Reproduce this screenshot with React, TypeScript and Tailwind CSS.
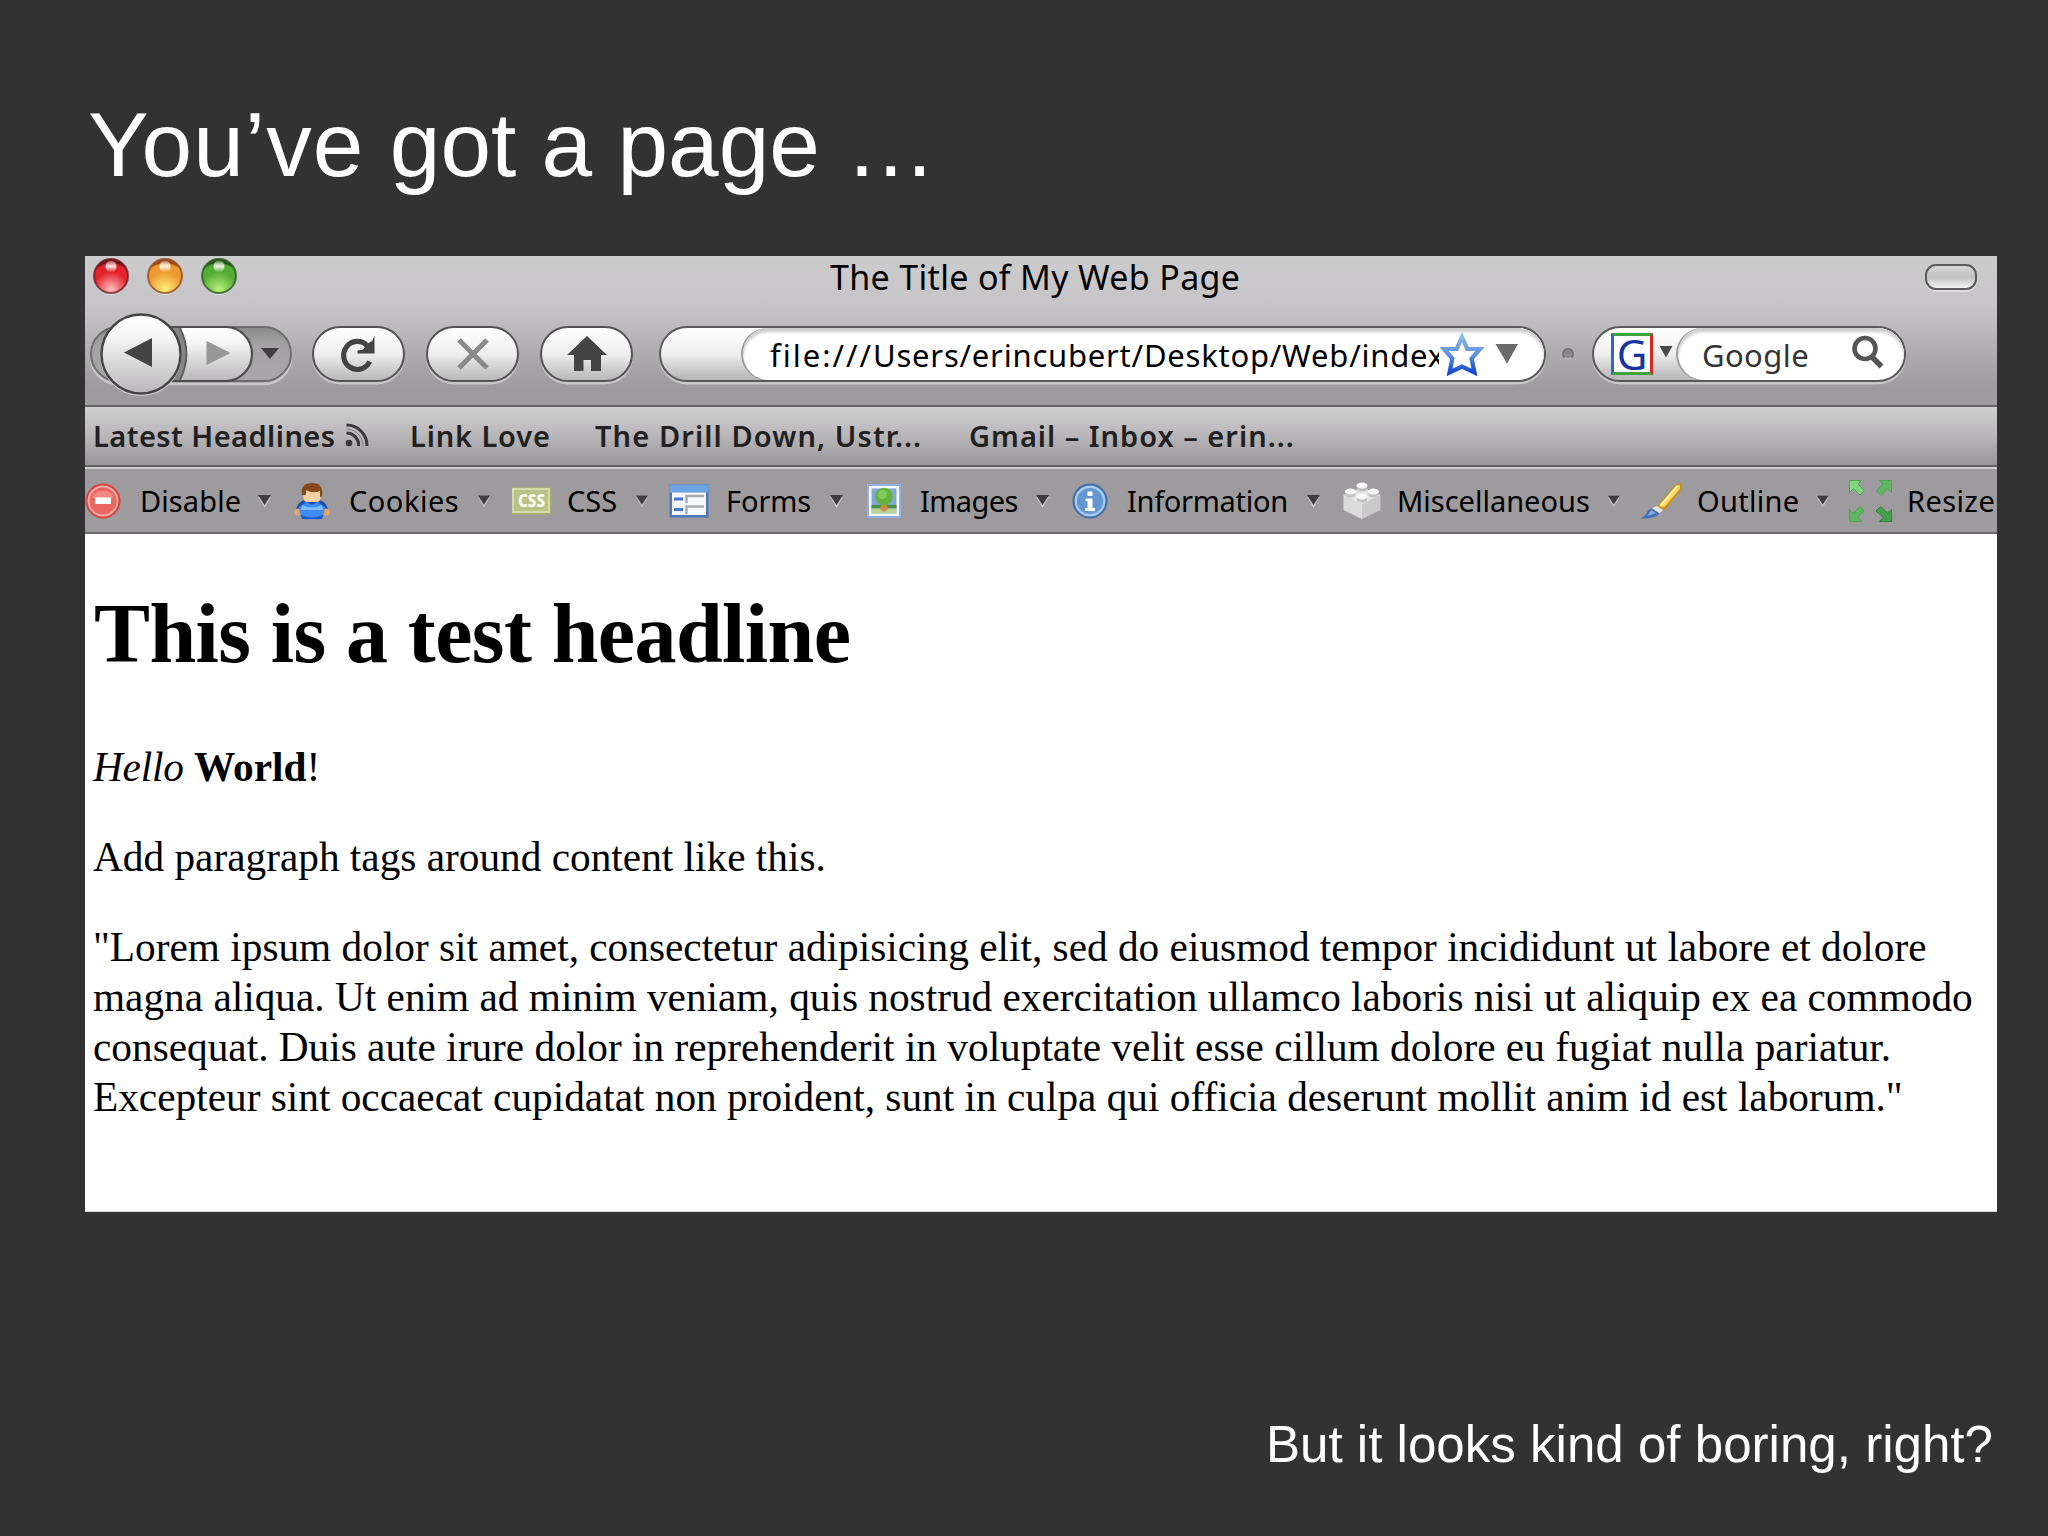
import type { ReactNode } from "react";

// ------------------------------ TITLE BAR ------------------------------
const LIGHTS = [
  { id: "close", rim: "#5e0f16", mid: "#e3222b", glow: "#ffc0c0" },
  { id: "minimize", rim: "#8a3a12", mid: "#ee9a33", glow: "#ffee7a" },
  { id: "zoom", rim: "#1c4a12", mid: "#55ac35", glow: "#b6f27c" },
];

function TrafficLight({ id, rim, mid, glow }: { id: string; rim: string; mid: string; glow: string }) {
  return (
    <svg width="38" height="40" viewBox="0 0 38 40">
      <defs>
        <radialGradient id={id} cx="0.5" cy="0.9" r="0.95">
          <stop offset="0" stopColor={glow} />
          <stop offset="0.55" stopColor={mid} />
          <stop offset="0.75" stopColor={mid} />
          <stop offset="1" stopColor={rim} />
        </radialGradient>
        <linearGradient id={id + "-gloss"} x1="0" y1="0" x2="0" y2="1">
          <stop offset="0" stopColor="#fff" stopOpacity="0.25" />
          <stop offset="0.5" stopColor="#fff" stopOpacity="0.85" />
          <stop offset="1" stopColor="#fff" stopOpacity="0" />
        </linearGradient>
      </defs>
      <ellipse cx="19" cy="21.5" rx="17.5" ry="17.5" fill="#e2e1e2" />
      <circle cx="19" cy="20" r="17" fill={"url(#" + id + ")"} stroke={rim} strokeWidth="2" strokeOpacity="0.7" />
      <path d="M6 11 A16 16 0 0 1 32 11 Q19 3 6 11Z" fill={rim} fillOpacity="0.75" />
      <ellipse cx="19" cy="10.500" rx="5.500" ry="6" fill={"url(#" + id + "-gloss)"} />
    </svg>
  );
}

function TitleBar() {
  return (
    <div className="flex h-10 items-center pl-[7px]">
      <div className="flex w-[738px] gap-[16px]">
        {LIGHTS.map((l) => <TrafficLight key={l.id} {...l} />)}
      </div>
      <h2 className="w-[1095px] pt-px text-[34px] leading-10 tracking-[0.33px] text-black">The Title of My Web Page</h2>
      <div className="mt-px h-[26px] w-[52px] rounded-[11px] border-[2.5px] border-[#5b5a5b] bg-linear-to-b from-[#d9d8d9] via-[#c2c1c2] to-[#f4f4f4] shadow-[0_2px_0_#dddcdd]" />
    </div>
  );
}

// ------------------------------ NAVIGATION ------------------------------
function HistoryButtons() {
  return (
    <svg width="210" height="86" viewBox="85 311 210 86">
      <defs>
        <linearGradient id="btn" x1="0" y1="0" x2="0" y2="1">
          <stop offset="0" stopColor="#ffffff" />
          <stop offset="0.3" stopColor="#f4f4f4" />
          <stop offset="1" stopColor="#b9b7b9" />
        </linearGradient>
        <linearGradient id="slot" x1="0" y1="0" x2="0" y2="1">
          <stop offset="0" stopColor="#8a898a" />
          <stop offset="0.3" stopColor="#a3a1a3" />
          <stop offset="1" stopColor="#a9a7a9" />
        </linearGradient>
      </defs>
      <rect x="91" y="329" width="200" height="55" rx="27" fill="none" stroke="#c9c8c9" strokeWidth="2.5" />
      <rect x="91" y="327" width="200" height="54" rx="27" fill="url(#slot)" stroke="#6d6c6d" strokeWidth="2" />
      <path d="M150 327 H226 A26 27 0 0 1 226 381 H150Z" fill="url(#btn)" stroke="#4f4e4f" strokeWidth="2.2" />
      <path d="M166 328 H180 Q193 354 180 380 H166Z" fill="#868586" />
      <path d="M180 328 Q193 354 180 380" fill="none" stroke="#5c5b5c" strokeWidth="1.8" />
      <circle cx="141" cy="355.5" r="39.5" fill="none" stroke="#cdcccd" strokeWidth="2" />
      <circle cx="141" cy="354" r="39.5" fill="url(#btn)" stroke="#454445" strokeWidth="2.4" />
      <path d="M124 352.5 L152 338 V367Z" fill="#444344" />
      <path d="M206.500 341 L230.500 353 L206.500 365Z" fill="#989798" />
      <path d="M261 348 H279 L270 359Z" fill="#3f3e3f" />
    </svg>
  );
}

function PillButton({ children }: { children: ReactNode }) {
  return (
    <button className="flex h-[56px] w-[93px] items-center justify-center rounded-full border-[2.5px] border-[#545354] bg-linear-to-b from-white via-[#eeeeee] to-[#bab8ba] shadow-[0_2.5px_0_#c9c8c9]">
      {children}
    </button>
  );
}

function LocationBar() {
  return (
    <div className="ml-[26px] flex h-[56px] w-[887px] overflow-hidden rounded-full border-[2.5px] border-[#5a595a] bg-linear-to-b from-white via-[#eeeeee] to-[#b6b4b6] pl-[82px] shadow-[0_2.5px_0_#c9c8c9]">
      <div className="flex flex-1 items-center rounded-full bg-white pl-[27px] text-[31px] leading-none text-black shadow-[inset_0_4px_3px_#cfcecf,-2px_0_0_#9d9c9d]">
        <div className="flex w-[669px] overflow-hidden pt-px leading-[48px] whitespace-nowrap">
          <span className="tracking-[2px]">file:///</span>
          <span className="tracking-[0.77px]">Users/erincubert/Desktop/Web/index</span>
        </div>
        <svg className="ml-px" width="44" height="44" viewBox="0 0 44 44">
          <defs>
            <linearGradient id="star" x1="0" y1="0" x2="0" y2="1">
              <stop offset="0" stopColor="#8db9e8" />
              <stop offset="0.5" stopColor="#5b92e0" />
              <stop offset="1" stopColor="#1748cf" />
            </linearGradient>
          </defs>
          <path d="M22 5 L27.300 16.800 L40 17 L31.600 26.500 L34.500 40.500 L22 34.500 L9.500 40.500 L12.400 26.500 L4 17 L16.700 16.800Z" fill="#fff" stroke="url(#star)" strokeWidth="4.2" />
        </svg>
        <svg className="ml-[11px]" width="24" height="20" viewBox="0 0 24 20">
          <path d="M0.500 0 H23 L12 19.500Z" fill="#6b6a6b" />
        </svg>
      </div>
    </div>
  );
}

function SearchBar() {
  return (
    <div className="ml-[18px] flex h-[56px] w-[314px] items-center overflow-hidden rounded-full border-[2.5px] border-[#5a595a] bg-linear-to-b from-white via-[#eeeeee] to-[#b6b4b6] pl-[17px] shadow-[0_2.5px_0_#c9c8c9]">
      <div className="flex h-[42px] w-[42px] items-center justify-center border-[3px] border-x-[#2f62d8] border-y-[#3ea43a] border-r-[#d42a22] bg-white text-[42px] leading-none text-[#17349c]">
        G
      </div>
      <svg className="-mt-1 ml-[6px]" width="14" height="12" viewBox="0 0 14 12">
        <path d="M0.500 0 H13.500 L7 11.500Z" fill="#4b4a4b" />
      </svg>
      <div className="ml-[5px] flex h-full flex-1 items-center rounded-full bg-white pl-[24px] shadow-[inset_0_4px_3px_#cfcecf,-2px_0_0_#9d9c9d]">
        <span className="w-[149px] pt-px text-[31px] leading-[48px] tracking-[0.4px] text-[#353435]">Google</span>
        <svg className="-mt-1" width="34" height="34" viewBox="0 0 34 34">
          <ellipse cx="14" cy="13.500" rx="10.500" ry="10.500" fill="none" stroke="#565556" strokeWidth="4.600" />
          <path d="M21 22 L30.500 31.500" stroke="#565556" strokeWidth="5.500" />
        </svg>
      </div>
    </div>
  );
}

function NavigationBar() {
  return (
    <div className="flex h-[109px] items-start pt-[15px]">
      <div className="flex h-[86px] items-center">
        <HistoryButtons />
        <div className="ml-[17px] flex gap-[21px]">
          <PillButton>
            <svg className="-ml-1" width="40" height="44" viewBox="0 0 40 44">
              <path d="M32.700 29.500 A13.700 14 0 1 1 30 13.500" fill="none" stroke="#454445" strokeWidth="5.200" />
              <path d="M37.500 4 V21.500 H20.500 V18.500 L26 17.500 L30 12 L35 9Z" fill="#454445" />
            </svg>
          </PillButton>
          <PillButton>
            <svg width="34" height="34" viewBox="0 0 34 34">
              <path d="M3 3 L31 31 M31 3 L3 31" stroke="#8b8a8b" strokeWidth="5" />
            </svg>
          </PillButton>
          <PillButton>
            <svg width="40" height="36" viewBox="0 0 40 36">
              <path d="M20 0 L40 19 H34 V35 H24 V24 H16.500 V35 H7 V19 H0Z" fill="#454445" />
            </svg>
          </PillButton>
        </div>
        <LocationBar />
        <div className="ml-[16px] h-[12px] w-[12px] rounded-full border-2 border-[#747374] border-b-[#b5b4b5] bg-[#8b8a8b]" />
        <SearchBar />
      </div>
    </div>
  );
}

// ------------------------------ BOOKMARKS ------------------------------
function BookmarksBar() {
  return (
    <div className="flex h-[62px] items-center border-y-[2.5px] border-[#646364] bg-linear-to-b from-[#d0cfd0] via-[#b8b6b8] to-[#989698] pb-[2px] pl-[8px] text-[29px] leading-none font-semibold whitespace-nowrap text-[#222122]">
      <span className="w-[252px] tracking-[0.45px]">Latest Headlines</span>
      <svg width="24" height="24" viewBox="0 0 24 24" fill="none" stroke="#3a393a" strokeWidth="3">
        <circle cx="4" cy="20" r="3.300" fill="#3a393a" stroke="none" />
        <path d="M1.500 10 A12 12 0 0 1 13.500 23 M1.500 2 A20.500 20.500 0 0 1 22 23" />
        <path d="M1.500 6 A16.500 16.500 0 0 1 18 23" stroke="#858485" strokeWidth="1" />
      </svg>
      <span className="ml-[41px] w-[185px] tracking-[0.85px]">Link Love</span>
      <span className="w-[374px] tracking-[1.1px]">The Drill Down, Ustr...</span>
      <span className="tracking-[1px]">Gmail – Inbox – erin...</span>
    </div>
  );
}

// ------------------------------ DEVELOPER TOOLBAR ------------------------------
function DisableIcon() {
  return (
    <svg width="36" height="38" viewBox="0 0 36 38">
      <circle cx="18" cy="19" r="17.500" fill="#d8433f" />
      <circle cx="18" cy="19" r="14.500" fill="#ea6661" stroke="#f6a9a5" strokeWidth="2" />
      <path d="M7 16 A12 12 0 0 1 29 16Z" fill="#f08a85" />
      <rect x="10" y="15.500" width="16" height="6.500" fill="#fff" />
    </svg>
  );
}

function CookiesIcon() {
  return (
    <svg width="36" height="38" viewBox="0 0 36 38">
      <path d="M2 27 Q4 19 12 17.500 H24 Q32 19 34 27 L30 33 H6Z" fill="#1f4fae" />
      <circle cx="4" cy="30" r="3.500" fill="#e8a468" />
      <circle cx="32" cy="30" r="3.500" fill="#e8a468" />
      <rect x="9.500" y="6" width="17" height="14" rx="4" fill="#f6cfa2" />
      <path d="M8 13 Q6 1 18 1 Q30 1 28 14 L26 15 V9 Q19 12 12 8 V13Z" fill="#87481a" />
      <path d="M13 20 Q18 25 23 20 L31 25 L29 36 Q18 39 7 36 L5 25Z" fill="#3f8df0" />
      <path d="M8 23 Q18 28 28 23 L29 28 H7Z" fill="#7dbbfa" />
      <path d="M7 33 Q18 38 29 33 L28 37 H8Z" fill="#1557c4" />
    </svg>
  );
}

function CssIcon() {
  return (
    <svg width="41" height="28" viewBox="0 0 41 28">
      <rect x="0.500" y="0.500" width="40" height="27" fill="#a5b06a" />
      <rect x="2" y="2" width="36" height="23" fill="#bac386" stroke="#d5dbad" strokeWidth="2" />
      <text x="20.500" y="20" textAnchor="middle" textLength="27" lengthAdjust="spacingAndGlyphs" fontSize="17" fontWeight="800" fontFamily="Noto Sans, sans-serif" fill="#fbfcf0">CSS</text>
    </svg>
  );
}

function FormsIcon() {
  return (
    <svg width="40" height="34" viewBox="0 0 40 34">
      <rect x="0.500" y="0.500" width="39" height="33" fill="#5076bd" />
      <rect x="0.500" y="0.500" width="39" height="8" fill="#6ea4e2" />
      <rect x="3" y="8.500" width="34" height="22.500" fill="#f7f8fb" />
      <path d="M5 15 H14 M5 25.500 H14" stroke="#4c73d6" strokeWidth="2.800" />
      <path d="M17.500 19 V12 H35 M17.500 30 V22.500 H35" fill="none" stroke="#a9aaac" strokeWidth="2.400" />
    </svg>
  );
}

function ImagesIcon() {
  return (
    <svg width="34" height="34" viewBox="0 0 34 34">
      <rect x="1" y="1" width="32" height="32" fill="#f8fafd" stroke="#8fb0e0" strokeWidth="2" />
      <rect x="4.500" y="4.500" width="25" height="25" fill="#84a5d3" />
      <rect x="4.500" y="21" width="25" height="3.500" fill="#4b923f" />
      <rect x="4.500" y="24.500" width="25" height="5" fill="#b9d59c" />
      <path d="M15 20 H19 L21 25 L17 28 L13 25Z" fill="#cf8a45" />
      <circle cx="17" cy="12.500" r="8.800" fill="#64b43f" />
      <circle cx="15.500" cy="10.500" r="4.500" fill="#83ca5a" />
    </svg>
  );
}

function InformationIcon() {
  return (
    <svg width="36" height="38" viewBox="0 0 36 38">
      <circle cx="18" cy="19" r="17.500" fill="#3c6cae" />
      <circle cx="18" cy="19" r="14.300" fill="#6297cf" stroke="#a9cbec" strokeWidth="2.400" />
      <path d="M15.500 9.500 H20.500 V14 H15.500Z M13.500 16.500 H20.500 V26 H23 V29 H13 V26 H15.500 V19 H13.500Z" fill="#fff" />
    </svg>
  );
}

function MiscIcon() {
  return (
    <svg width="38" height="38" viewBox="0 0 38 38">
      <path d="M0.500 13 L19 20 V37 L0.500 28Z" fill="#dcdcdc" />
      <path d="M37.500 13 L19 20 V37 L37.500 28Z" fill="#c9c9c9" />
      <path d="M0.500 13 L19 5 L37.500 13 L19 22Z" fill="#e6e6e6" />
      <path d="M14 3 H24 V8 Q19 11 14 8Z M2.500 9 H12.500 V14 Q7.500 17 2.500 14Z M25.500 9 H35.500 V14 Q30.500 17 25.500 14Z M14 14 H24 V19 Q19 22 14 19Z" fill="#c2c2c2" />
      <g fill="#fafafa">
        <ellipse cx="19" cy="3.500" rx="5.500" ry="3" />
        <ellipse cx="7.500" cy="9.500" rx="5.500" ry="3" />
        <ellipse cx="30.500" cy="9.500" rx="5.500" ry="3" />
        <ellipse cx="19" cy="14.500" rx="5.500" ry="3" />
      </g>
    </svg>
  );
}

function OutlineIcon() {
  return (
    <svg width="42" height="38" viewBox="0 0 42 38">
      <path d="M41.500 1 Q42.500 4 41 8 L25 28 L16 25 L34 4 Q38 0.500 41.500 1Z" fill="#c98f1f" />
      <path d="M39.500 2.500 L40 6.500 L24 25.500 L19 24 L35 5Z" fill="#f8d75c" />
      <path d="M37.500 4 L20.500 23.500" stroke="#fff2b0" strokeWidth="2" />
      <path d="M12 26 L17 24 L23 28 L19 32Z" fill="#e4e4df" />
      <path d="M12 26.500 L19.500 31.500 Q15 37 0.500 36.500 Q6 33.500 7.500 29.500 Q9 26.500 12 26.500Z" fill="#3f6fb9" />
      <path d="M11.500 28 L16 31 Q11 33.500 7 33.500Z" fill="#84abdf" />
    </svg>
  );
}

function ResizeIcon() {
  return (
    <svg width="43" height="42" viewBox="0 0 43 42" stroke="#4fa352" strokeWidth="1" fill="#6cc46c">
      <path d="M0.500 0.500 H12 L9 4 L15 10.500 L11 15 L4.500 8.500 L0.500 12.500Z" fill="#83d67f" />
      <path d="M42.500 0.500 V12.500 L38.500 8.500 L32 15.500 L27.500 11 L34 4 L30.500 0.500Z" fill="#5fb562" />
      <path d="M0.500 41.500 V29.500 L4.500 33.500 L11 26.500 L15 31 L9 37.500 L12.500 41.500Z" fill="#5fb562" />
      <path d="M42.500 41.500 H30.500 L34.500 37.500 L27 31 L31.500 26.500 L38.500 33 L42.500 29.500Z" fill="#439f49" stroke="#2f8438" />
    </svg>
  );
}

const TOOLS = [
  { label: "Disable", Icon: DisableIcon, item: "w-[209px]", icon: "w-[55px]", text: "tracking-[0.1px]", arrow: "w-[36px]" },
  { label: "Cookies", Icon: CookiesIcon, item: "w-[217px]", icon: "w-[55px]", text: "tracking-[0.5px]", arrow: "w-[33px]" },
  { label: "CSS", Icon: CssIcon, item: "w-[158px]", icon: "w-[56px]", text: "tracking-normal", arrow: "w-[33px]" },
  { label: "Forms", Icon: FormsIcon, item: "w-[198px]", icon: "w-[57px]", text: "tracking-[-0.1px]", arrow: "w-[37px]" },
  { label: "Images", Icon: ImagesIcon, item: "w-[205px]", icon: "w-[53px]", text: "tracking-[-0.6px]", arrow: "w-[36px]" },
  { label: "Information", Icon: InformationIcon, item: "w-[271px]", icon: "w-[55px]", text: "tracking-[-0.3px]", arrow: "w-[36px]" },
  { label: "Miscellaneous", Icon: MiscIcon, item: "w-[297px]", icon: "w-[54px]", text: "tracking-normal", arrow: "w-[32px]" },
  { label: "Outline", Icon: OutlineIcon, item: "w-[209px]", icon: "w-[57px]", text: "tracking-[0.3px]", arrow: "w-[32px]" },
  { label: "Resize", Icon: ResizeIcon, item: "w-[148px]", icon: "w-[58px]", text: "tracking-[0.4px]", arrow: "" },
];

function DeveloperToolbar() {
  return (
    <div className="flex h-[67px] items-center overflow-hidden border-t-[2.5px] border-b-[2.5px] border-t-[#cdcccd] border-b-[#6b6a6b] bg-[#9d9b9d] text-[29px] leading-none text-black">
      {TOOLS.map(({ label, Icon, item, icon, text, arrow }) => (
        <div key={label} className={"flex shrink-0 items-center " + item}>
          <span className={"shrink-0 " + icon}><Icon /></span>
          <span className={"flex-1 pb-px whitespace-nowrap " + text}>{label}</span>
          {arrow && (
            <svg className={"h-[14px] shrink-0 " + arrow} viewBox="0 0 36 14" preserveAspectRatio="xMinYMid meet">
              <path d="M0 3 H13 L6.500 14Z" fill="#c4c3c4" />
              <path d="M0 1 H13 L6.500 11Z" fill="#3f3e3f" />
            </svg>
          )}
        </div>
      ))}
    </div>
  );
}

// ------------------------------ PAGE ------------------------------
const LOREM = [
  "\"Lorem ipsum dolor sit amet, consectetur adipisicing elit, sed do eiusmod tempor incididunt ut labore et dolore",
  "magna aliqua. Ut enim ad minim veniam, quis nostrud exercitation ullamco laboris nisi ut aliquip ex ea commodo",
  "consequat. Duis aute irure dolor in reprehenderit in voluptate velit esse cillum dolore eu fugiat nulla pariatur.",
  "Excepteur sint occaecat cupidatat non proident, sunt in culpa qui officia deserunt mollit anim id est laborum.\"",
];

function WebPage() {
  return (
    <div className="flex-1 border-b border-[#d4d3d0] bg-white pl-[8px] font-['Liberation_Serif',serif] text-[41.3px] leading-[50px] text-black">
      <h1 className="pt-[58px] pl-px text-[84px] leading-[84px] font-bold tracking-[-0.6px]">This is a test headline</h1>
      <p className="mt-[66px]">
        <em className="tracking-[-0.2px]">Hello</em> <strong>World</strong>!
      </p>
      <p className="mt-[40px]">Add paragraph tags around content like this.</p>
      <p className="mt-[40px] whitespace-nowrap">
        {LOREM.map((line) => <span key={line} className="block">{line}</span>)}
      </p>
    </div>
  );
}

export default function App() {
  return (
    <div className="flex h-[1536px] w-[2048px] flex-col overflow-hidden bg-[#333233] pl-[85px] font-['Liberation_Sans',sans-serif] text-white">
      <h1 className="mt-[95px] ml-[3px] h-[100px] text-[91px] leading-[100px]">
        <span className="tracking-[1.1px]">You’ve</span> got a page …
      </h1>

      {/* Browser window */}
      <div className="mt-[61px] flex h-[956px] w-[1912px] flex-col overflow-hidden font-['Noto_Sans',sans-serif]">
        <div className="bg-linear-to-b from-[#cdcccd] from-0% via-[#c6c4c6] via-35% to-[#9d9b9d] to-88%">
          <TitleBar />
          <NavigationBar />
        </div>
        <BookmarksBar />
        <DeveloperToolbar />
        <WebPage />
      </div>

      <p className="mt-[203px] mr-[55px] text-right text-[51.1px] leading-[60px]">But it looks kind of boring, right?</p>
    </div>
  );
}
